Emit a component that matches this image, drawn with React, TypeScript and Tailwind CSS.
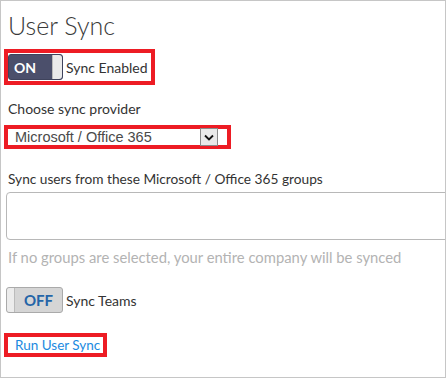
export default function App() {
  return (
    <div className="w-[446px] h-[378px] overflow-hidden border border-[#c6c6c6] bg-white pl-[3px] font-['Lato',sans-serif] text-[#333]">
      <h1 className="mt-[9px] pl-[4px] text-[25px] font-light leading-[30px] text-[#3a3a3a]">User Sync</h1>

      {/* sync enabled */}
      <div className="mt-[9px] flex h-[36px] w-[151px] items-center border-4 border-[#ed1c24]">
        <div className="flex h-[26px] w-[55px] shrink-0 items-center rounded-[3px] border border-[#3f435c] bg-[#4b4f6b]">
          <span className="flex-1 pl-[5px] text-[14px] font-bold text-white">ON</span>
          <span className="h-full w-[10px] rounded-r-[3px] border-l border-[#bbb] bg-[#eaeaea]"></span>
        </div>
        <span className="ml-[3px] text-[14px] text-[#333]">Sync Enabled</span>
      </div>

      <div className="mt-[15px] pl-[4px] text-[14px] leading-[18px]">Choose sync provider</div>

      {/* provider */}
      <div className="mt-[7px] flex h-[24px] w-[227px] items-center border-4 border-[#ed1c24]">
        <span className="flex-1 pl-[7px] pt-[1px] font-['Liberation_Sans',Arial,sans-serif] text-[14.5px] leading-[15px] text-[#4a4a4a]">Microsoft / Office 365</span>
        <span className="mr-[9px] flex h-[18px] w-[18px] items-center justify-center border border-[#8a8a8a] bg-[#e9e9e9]">
          <svg width="10" height="7" viewBox="0 0 10 7">
            <path d="M1 1.5 L5 5.5 L9 1.5" fill="none" stroke="#111" strokeWidth="1.8" />
          </svg>
        </span>
      </div>

      <div className="mt-[21px] pl-[4px] text-[13.7px] leading-[18px]">Sync users from these Microsoft / Office 365 groups</div>

      <div className="ml-[2px] mt-[4px] h-[48px] w-[460px] rounded-[4px] border border-[#b8b8b8]"></div>

      <div className="mt-[8px] pl-[4px] text-[14.8px] leading-[18px] text-[#b3b3b3]">
        If no groups are selected, your entire company will be synced
      </div>

      {/* sync teams */}
      <div className="ml-[2px] mt-[21px] flex items-center">
        <div className="flex h-[26px] w-[57px] shrink-0 items-center rounded-[3px] border border-[#aaa] bg-[#d5d5d5]">
          <span className="h-full w-[8px] rounded-l-[3px] border-r border-[#bbb] bg-[#ececec]"></span>
          <span className="flex-1 text-center text-[15px] font-bold text-[#2565a8]">OFF</span>
        </div>
        <span className="ml-[3px] text-[14px] text-[#333]">Sync Teams</span>
      </div>

      <div className="mt-[20px] inline-flex h-[24px] w-[103px] items-center border-4 border-[#ed1c24]">
        <a href="#" className="pl-[7px] text-[13.5px] text-[#1b8ae0]">Run User Sync</a>
      </div>
    </div>
  );
}
